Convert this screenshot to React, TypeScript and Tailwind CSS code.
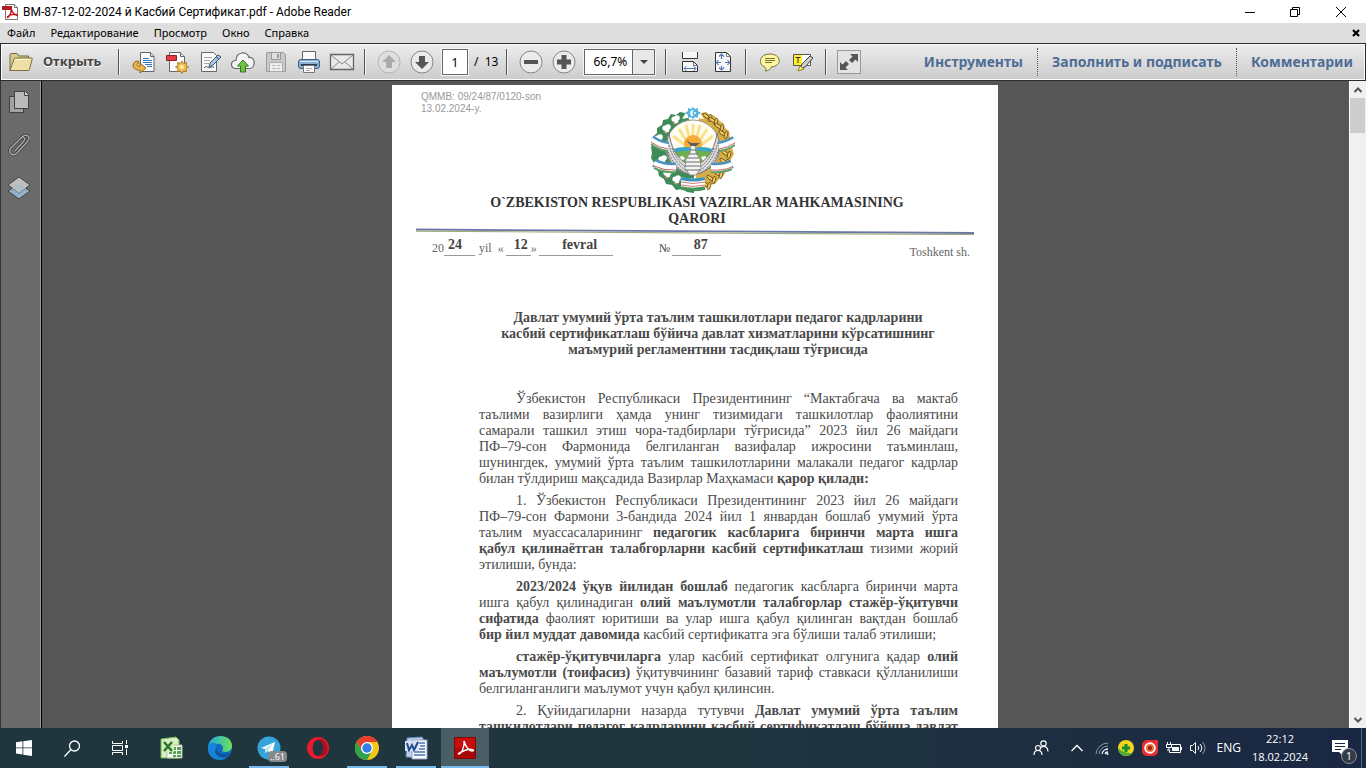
import type { ReactNode } from "react";
import { clsx } from "clsx";

type IconButtonProps = {
  label: string;
  className?: string;
  children: ReactNode;
};

type TaskApp = {
  name: string;
  running?: boolean;
  active?: boolean;
  icon: ReactNode;
};

type Line = {
  content: ReactNode;
  indent?: boolean;
  last?: boolean;
};

const menuItems = ["Файл", "Редактирование", "Просмотр", "Окно", "Справка"];

const IconButton = ({ label, className, children }: IconButtonProps) => (
  <button
    type="button"
    aria-label={label}
    className={clsx("flex shrink-0 items-center justify-center", className ?? "h-8 w-[33px]")}
  >
    {children}
  </button>
);

const Separator = () => (
  <div className="h-[26px] w-0.5 shrink-0 border-l border-[#555] bg-[#f4f4f4]" />
);

/* ---------- Toolbar icons ---------- */

const AcrobatIcon = () => (
  <svg width="18" height="18" viewBox="0 0 18 18">
    <path d="M3.5 1.5h9l3 3v12h-12z" fill="#fff" stroke="#777" />
    <path d="M12.500 1.500v3h3" fill="#ddd" stroke="#777" />
    <path d="M0 3h10v4H0z" fill="#b01c22" />
    <path d="M9 6c2 4 3 6 7 6.500M9 6c1 3-1 7-4 9M5 14c3-2.500 6-3 10-2.500" fill="none" stroke="#c4161c" strokeWidth="1.500" />
  </svg>
);

const FolderIcon = () => (
  <svg width="24" height="20" viewBox="0 0 24 20">
    <path d="M1 18.500V3q0-1.500 1.500-1.500H8l2 2.500h9.500V8" fill="#d8c98c" stroke="#6f6640" />
    <path d="M1 18.500 5 7q.5-1 2-1h15.500q1 0 .7 1l-2.700 10.500q-.3 1-1.500 1z" fill="#eedfa6" stroke="#7d7040" />
    <path d="M6 7.500h15" stroke="#fff8d8" />
  </svg>
);

const ExportIcon = () => (
  <svg width="24" height="24" viewBox="0 0 24 24">
    <path d="M8.500 2.500h10l3.500 3.500v15.500h-13.500z" fill="#fafafa" stroke="#666" />
    <path d="M18.500 2.500v4h3.500" fill="#ddd" stroke="#666" />
    <path d="M11 8.500h6M11 10.500h9M11 12.500h9M13 14.500h7M15 16.500h5" stroke="#3972b8" />
    <path d="M6.500 11C-1 11-1 20.500 8 20v3l6-5-6-5v3.200C4.500 16.500 3.500 13 7 13z" fill="#efb540" stroke="#94621b" />
  </svg>
);

const CreateIcon = () => (
  <svg width="24" height="24" viewBox="0 0 24 24">
    <path d="M4.500 2.500h11l4 4v15h-15z" fill="#fafafa" stroke="#666" />
    <path d="M15.500 2.500v4h4" fill="#ddd" stroke="#666" />
    <path d="M1.500 5.500h10v5h-10z" fill="#e43a43" stroke="#8d2027" />
    <path d="m17 11 1.500 2.500 3-1-.5 3 2.500 1.500-2.500 1.500.5 3-3-.5-1.500 2.500-1.500-2.500-3 .5.500-3-2.500-1.500 2.500-1.500-.5-3 3 1z" fill="#f3bf55" stroke="#b37b22" />
    <circle cx="17" cy="17" r="2" fill="#fff0b5" />
  </svg>
);

const SignIcon = () => (
  <svg width="24" height="24" viewBox="0 0 24 24">
    <path d="M3.500 2.500h12l3 3v16h-15z" fill="#fafafa" stroke="#666" />
    <path d="M6 7.500h8M6 10.500h6M6 13.500h5" stroke="#aaa" />
    <path d="M6 18c3-4 4 2 7-1h3" fill="none" stroke="#555" />
    <path d="m11 17 1-4 8-8 3 2-8 8z" fill="#a9c8e5" stroke="#3e5874" />
    <path d="m18 7 3 2" stroke="#3e5874" />
  </svg>
);

const CloudIcon = () => (
  <svg width="26" height="24" viewBox="0 0 26 24">
    <path d="M6 18.500c-6 0-6-8 0-8 0-9 11-10 13-3 7-1 7 11 0 11z" fill="#f5f5f5" stroke="#666" strokeWidth="1.200" />
    <path d="m13 10 5.500 6h-3v6h-5v-6h-3z" fill="#72c342" stroke="#2d7a20" />
  </svg>
);

const SaveIcon = () => (
  <svg width="22" height="22" viewBox="0 0 22 22">
    <path d="M1.500 1.500h17l2 2v17h-19z" fill="#c9c9c9" stroke="#999" />
    <path d="M6.500 1.500h9v7h-9z" fill="#ddd" stroke="#999" />
    <path d="M12 3h2v4h-2z" fill="#999" />
    <path d="M4.500 11.500h13v9h-13z" fill="#eee" stroke="#aaa" />
    <path d="M7 14.500h8M7 17.500h8" stroke="#bbb" strokeDasharray="4 1" />
  </svg>
);

const PrintIcon = () => (
  <svg width="24" height="24" viewBox="0 0 24 24">
    <path d="M5.500 1.500h13v9h-13z" fill="#fafafa" stroke="#666" />
    <rect x="1.500" y="9.500" width="21" height="9" rx="2.500" fill="#89b1d5" stroke="#3f5f80" />
    <path d="M3 11.500h18" stroke="#d4e7f7" />
    <path d="M4 14h16v2H4z" fill="#273c52" />
    <path d="M6.500 15.500h11v7h-11z" fill="#fafafa" stroke="#777" />
    <path d="M9 18.500h6M9 20.500h4" stroke="#aaa" />
  </svg>
);

const MailIcon = () => (
  <svg width="26" height="18" viewBox="0 0 26 18">
    <path d="M1.500 1.500h23v15h-23z" fill="#e9e9e9" stroke="#666" strokeWidth="1.300" />
    <path d="m2 2 11 9 11-9M2 16l8-7M24 16l-8-7" fill="none" stroke="#888" />
  </svg>
);

const RoundIcon = ({ path, faded }: { path: string; faded?: boolean }) => (
  <svg width="24" height="24" viewBox="0 0 24 24">
    <circle cx="12" cy="12" r="11" fill={faded ? "#dedede" : "#ebebeb"} stroke={faded ? "#b5b5b5" : "#858585"} />
    <path d={path} fill={faded ? "#aaa" : "#555"} />
  </svg>
);

const FitWidthIcon = () => (
  <svg width="20" height="24" viewBox="0 0 20 24">
    <path d="M2.500 2v6.500h15V2" fill="#f7f7f7" stroke="#333" />
    <path d="M2.500 21.500v-10h11l4 4v6z" fill="#f7f7f7" stroke="#333" />
    <path d="M13.500 11.500v4h4" fill="none" stroke="#777" />
    <path d="M4 18.500h12M6.500 16 4 18.500 6.500 21M13.500 16l2.500 2.500-2.500 2.500" fill="none" stroke="#5877b8" />
  </svg>
);

const FitPageIcon = () => (
  <svg width="20" height="24" viewBox="0 0 20 24">
    <path d="M2.500 2.500h11l4 4v15h-15z" fill="#f7f7f7" stroke="#333" />
    <path d="M13.500 2.500v4h4" fill="none" stroke="#777" />
    <path d="M4 12.500h4M12 12.500h4M8.500 4v5M8.500 16v4M6 6.500 8.500 4 11 6.500M6 17.500 8.500 20l2.500-2.500M5.500 10 3.500 12.500l2 2.500M14.500 10l2 2.500-2 2.500" fill="none" stroke="#5877b8" strokeWidth="1.200" />
  </svg>
);

const CommentIcon = () => (
  <svg width="22" height="20" viewBox="0 0 22 20">
    <path d="M5 14.500C-1 12 0 2 11 2s13 12 1 13c0 2-3 4-6 4 2-2 1-3-1-4.500z" fill="#fff7a0" stroke="#77703a" />
    <path d="M6 6.500h10M6 8.500h10M6 10.500h7" stroke="#77703a" />
  </svg>
);

const HighlightIcon = () => (
  <svg width="22" height="20" viewBox="0 0 22 20">
    <path d="M1.500 2.500h17v11h-17z" fill="#fff" stroke="#555" />
    <path d="M2 3h8v10H2z" fill="#ffef2e" />
    <path d="M3.500 5.500h5M6 5.500V11" stroke="#333" />
    <path d="m8 17 2-5 8-8 3 2-8 9z" fill="#ccc" stroke="#444" />
    <path d="m6 19 2-5 4 3z" fill="#fff15a" stroke="#8e872b" />
  </svg>
);

const ExpandIcon = () => (
  <svg width="22" height="22" viewBox="0 0 22 22">
    <path d="M12 3h8v8l-2.500-2.500-3.500 3.500-3-3 3.500-3.500zM2 11l2.500 2.500L8 10l3 3-3.500 3.500L10 19H2z" fill="#555" />
  </svg>
);

/* ---------- Emblem ---------- */

const cotton = [
  [23, 12],
  [14, 21],
  [6, 31],
  [10, 52],
  [15, 66],
  [24, 72],
];

const wheat = [
  [55, 9],
  [61, 13],
  [67, 19],
  [71, 26],
  [74, 46],
  [72, 54],
  [66, 66],
  [59, 71],
  [54, 77],
];

const ribbons = [
  "M0 32q8 6 17 7",
  "M3 56q10 5 22 4",
  "M84 33q-8 5-16 6",
  "M81 57q-9 4-21 3",
];

const Emblem = () => (
  <svg width="84" height="86" viewBox="0 0 84 86" role="img" aria-label="O`zbekiston gerbi" className="mx-auto">
    <path d="m34 6-5-1-4 3-5-1-3 5-5 1-1 5-5 3v5l-4 4 1 5-3 5 1 6-1 5 3 5v5l4 3 1 5 5 3 2 5 6 1 4 5 6-1 5 3 7 1V20z" fill="#3e8a58" />
    <path d="m50 6 5-1 4 3 5 1 3 4 5 3 2 5 4 3 1 6 3 5-1 6 2 6-3 5-1 6-4 5-2 5-5 4-4 5-6 1-5 4-8-1V20z" fill="#d8ad43" />
    {wheat.map(([x, y]) => (
      <g key={`${x}-${y}`} fill="#edc75c" stroke="#5e471a" strokeWidth="0.8">
        <ellipse cx={x} cy={y} rx="1.600" ry="3.800" transform={`rotate(-55 ${x} ${y})`} />
        <ellipse cx={x + 4} cy={y + 2} rx="1.600" ry="3.800" transform={`rotate(15 ${x + 4} ${y + 2})`} />
      </g>
    ))}
    {cotton.map(([x, y]) => (
      <g key={`${x}-${y}`} fill="#fff">
        <circle cx={x} cy={y} r="2.600" />
        <circle cx={x + 3} cy={y - 1} r="2.800" />
        <circle cx={x + 2} cy={y + 2} r="2.400" />
        <path d={`M${x - 1} ${y + 4}l3 1`} stroke="#c98f74" strokeWidth="1.500" />
      </g>
    ))}
    <circle cx="42" cy="40" r="27" fill="#fffdf2" stroke="#999" />
    <path d="M42 17v16M35 18l4 15M28 22l8 13M49 18l-4 15M56 22l-8 13M22 29l12 9M62 29l-12 9" stroke="#fae28c" strokeWidth="3" />
    <circle cx="42" cy="37" r="9" fill="#f4ab38" />
    <path d="M20 43q10-5 22-2 12-3 22 2v5H20z" fill="#3aa6c4" />
    <path d="M19 46q24-5 46 0l-5 16H25z" fill="#6fae4c" />
    <path d="M28 50l4-1 2 3-5 2zM50 50l4-1 3 3-5 2z" fill="#fff" />
    {/* wings */}
    <path d="M18 26c-6 19 0 36 23 42 0-6-4-10-8-13-8-6-13-15-15-29z" fill="#dcdcdc" stroke="#777" />
    <path d="M66 26c6 19 0 36-23 42 0-6 4-10 8-13 8-6 13-15 15-29z" fill="#dcdcdc" stroke="#777" />
    <path d="M17 35c3 13 9 23 21 31M16 42c4 11 9 18 18 24M21 41c3 9 8 15 16 21M67 35c-3 13-9 23-21 31M68 42c-4 11-9 18-18 24M63 41c-3 9-8 15-16 21" fill="none" stroke="#777" strokeDasharray="2 1" />
    {/* body and tail feathers */}
    <path d="M40 37h4l1 9 4 6 1 9-5 7h-6l-5-7 1-9 4-6z" fill="#f4f4f4" stroke="#888" strokeWidth="0.800" />
    <path d="m35 33 5 3h9l-4 3h-5z" fill="#5c5c5c" />
    <path d="M39 43h6M38 47h8M36 51h12M35 55h14M34 59h16M35 63h14" stroke="#6a6a6a" />
    {ribbons.map((d) => (
      <g key={d} fill="none">
        <path d={d} stroke="#4a92c4" strokeWidth="9" />
        <path d={d} stroke="#fff" strokeWidth="4" />
        <g transform="translate(0 3)">
          <path d={d} stroke="#fff" strokeWidth="4" />
          <path d={d} stroke="#cf5f5f" strokeWidth="1" />
        </g>
        <g transform="translate(0 5)">
          <path d={d} stroke="#5aa268" strokeWidth="2" />
        </g>
      </g>
    ))}
    <path d="M30 70q12 3 24 0v12q-12 4-24 0z" fill="#fff" />
    <path d="M30 71.500q12 3 24 0" fill="none" stroke="#3993bd" strokeWidth="3" />
    <path d="M30 75q12 3 24 0M30 78q12 3 24 0" fill="none" stroke="#cf5558" strokeWidth="0.800" />
    <path d="M30 81q12 3 24 0" fill="none" stroke="#45945a" strokeWidth="3.500" />
    <path d="m36 4 6-4 6 4 5 8q-11-3-22 0z" fill="#fff" />
    <path d="m42 0 2 2 3-1v3l3 2-3 2v3l-3-1-2 2-2-2-3 1V8l-3-2 3-2V1l3 1z" fill="#56b5df" />
    <path d="M43 3c-5-1-5 7 0 6-2-1-2-5 0-6z" fill="#fff" />
    <circle cx="44" cy="6" r="1" fill="#fff" />
  </svg>
);

/* ---------- Document ---------- */

const paragraphs: Line[][] = [
  [
    { content: "Ўзбекистон Республикаси Президентининг “Мактабгача ва мактаб", indent: true },
    { content: "таълими вазирлиги ҳамда унинг тизимидаги ташкилотлар фаолиятини" },
    { content: "самарали ташкил этиш чора-тадбирлари тўғрисида” 2023 йил 26 майдаги" },
    { content: "ПФ–79-сон Фармонида белгиланган вазифалар ижросини таъминлаш," },
    { content: "шунингдек, умумий ўрта таълим ташкилотларини малакали педагог кадрлар" },
    {
      content: <>билан тўлдириш мақсадида Вазирлар Маҳкамаси <b>қарор қилади:</b></>,
      last: true,
    },
  ],
  [
    { content: "1. Ўзбекистон Республикаси Президентининг 2023 йил 26 майдаги", indent: true },
    { content: "ПФ–79-сон Фармони 3-бандида 2024 йил 1 январдан бошлаб умумий ўрта" },
    { content: <>таълим муассасаларининг <b>педагогик касбларига биринчи марта ишга</b></> },
    { content: <><b>қабул қилинаётган талабгорларни касбий сертификатлаш</b> тизими жорий</> },
    { content: "этилиши, бунда:", last: true },
  ],
  [
    { content: <><b>2023/2024 ўқув йилидан бошлаб</b> педагогик касбларга биринчи марта</>, indent: true },
    { content: <>ишга қабул қилинадиган <b>олий маълумотли талабгорлар стажёр-ўқитувчи</b></> },
    { content: <><b>сифатида</b> фаолият юритиши ва улар ишга қабул қилинган вақтдан бошлаб</> },
    {
      content: <><b>бир йил муддат давомида</b> касбий сертификатга эга бўлиши талаб этилиши;</>,
      last: true,
    },
  ],
  [
    { content: <><b>стажёр-ўқитувчиларга</b> улар касбий сертификат олгунига қадар <b>олий</b></>, indent: true },
    { content: <><b>маълумотли (тоифасиз)</b> ўқитувчининг базавий тариф ставкаси қўлланилиши</> },
    { content: "белгиланганлиги маълумот учун қабул қилинсин.", last: true },
  ],
  [
    { content: <>2. Қуйидагиларни назарда тутувчи <b>Давлат умумий ўрта таълим</b></>, indent: true },
    { content: <b>ташкилотлари педагог кадрларини касбий сертификатлаш бўйича давлат</b> },
  ],
];

const DocumentPage = () => (
  <article className="h-[860px] w-[606px] shrink-0 bg-white pt-1.5 font-['Liberation_Serif',serif] text-sm leading-4 text-[#4a4a4a]">
    <p className="pl-[29px] font-['Liberation_Sans',sans-serif] text-[10px] leading-3 text-[#999]">
      QMMB: 09/24/87/0120-son
      <br />
      13.02.2024-y.
    </p>
    <div className="-mt-2 pr-1">
      <Emblem />
    </div>
    <h1 className="pt-0.5 pl-1 text-center font-bold text-[#333]">
      O`ZBEKISTON RESPUBLIKASI VAZIRLAR MAHKAMASINING
      <br />
      QARORI
    </h1>
    <svg viewBox="0 0 558 8" className="mx-6 h-2 w-[558px]">
      <path d="M0 2.500 558 6" stroke="#6b77a8" strokeWidth="1.800" />
      <path d="M0 4.200 558 7.600" stroke="#9cab78" strokeWidth="1.200" />
    </svg>
    <div className="flex h-[25px] pr-7 pl-10 text-xs text-[#666]">
      <div className="flex h-[21px] items-end">
        <span>20</span>
        <b className="w-[31px] border-b border-[#999] pl-1 text-sm text-[#444]">24</b>
        <span className="pl-1">yil</span>
        <span className="pl-1.5">«</span>
        <b className="ml-0.5 w-[25px] border-b border-[#999] pl-2 text-sm text-[#444]">12</b>
        <span>»</span>
        <b className="ml-0.5 w-[74px] border-b border-[#999] pl-2 text-center text-sm text-[#444]">fevral</b>
        <span className="ml-[46px] text-[#444]">№</span>
        <b className="ml-0.5 w-[49px] border-b border-[#999] pl-2 text-center text-sm text-[#444]">87</b>
      </div>
      <span className="ml-auto self-end">Toshkent sh.</span>
    </div>
    <h2 className="pt-[50px] pl-[46px] text-center font-bold">
      Давлат умумий ўрта таълим ташкилотлари педагог кадрларини
      <br />
      касбий сертификатлаш бўйича давлат хизматларини кўрсатишнинг
      <br />
      маъмурий регламентини тасдиқлаш тўғрисида
    </h2>
    <div className="space-y-1.5 pt-[33px] pr-10 pl-[87px]">
      {paragraphs.map((lines, index) => (
        <p key={index}>
          {lines.map((line, row) => (
            <span
              key={row}
              className={clsx(
                "block whitespace-nowrap",
                line.indent && "pl-[37px]",
                !line.last && "[text-align-last:justify]"
              )}
            >
              {line.content}
            </span>
          ))}
        </p>
      ))}
    </div>
  </article>
);

/* ---------- Taskbar ---------- */

const apps: TaskApp[] = [
  {
    name: "Excel",
    icon: (
      <svg width="24" height="24" viewBox="0 0 24 24">
        <path d="M2 3 17 1l3 3v18L2 22z" fill="#d9f0c4" stroke="#6fae4c" />
        <path d="M8 9h15v13H8z" fill="#f7fbf4" stroke="#aebfa5" />
        <path d="M10 11h3v3h-3zM14 11h3v3h-3zM18 11h4v3h-4zM10 15h3v3h-3zM14 15h3v3h-3zM18 15h4v3h-4zM14 19h3v2h-3zM18 19h4v2h-4z" fill="#57a456" />
        <path d="M3 5h12v11H3z" fill="#d2edb6" />
        <path d="m5 6 8 9M13 6l-8 9" stroke="#28752d" strokeWidth="2.500" />
      </svg>
    ),
  },
  {
    name: "Edge",
    icon: (
      <svg width="26" height="26" viewBox="0 0 26 26">
        <defs>
          <linearGradient id="edge" x1="0" x2="1">
            <stop stopColor="#25a9e0" />
            <stop offset="1" stopColor="#6ce05a" />
          </linearGradient>
        </defs>
        <circle cx="13" cy="13" r="12" fill="#1268bb" />
        <path d="M1 12C3-3 25-2 25 11c0 6-7 7-10 5 3-4-1-8-5-7-4 0-8 2-9 3z" fill="url(#edge)" />
        <path d="M10 10c-4 8 1 13 9 13-8 5-19-1-18-10 0-5 7-7 9-3z" fill="#1684d8" />
        <path d="M10 12c-1 6 5 9 13 6-4 8-15 4-15-2z" fill="#0d559f" />
      </svg>
    ),
  },
  {
    name: "Telegram",
    running: true,
    icon: (
      <>
        <svg width="24" height="24" viewBox="0 0 24 24">
          <circle cx="12" cy="12" r="11.500" fill="#34a5db" />
          <path d="m4 12 14-6-3 13-4-4-3 2v-4z" fill="#fff" />
          <path d="m8 13 8-6-5 8-3 2z" fill="#bddff1" />
        </svg>
        <span className="absolute right-1.5 bottom-1.5 rounded-sm bg-[#85898c] px-0.5 text-[9px] leading-[11px] text-white">
          ..61
        </span>
      </>
    ),
  },
  {
    name: "Opera",
    icon: (
      <svg width="24" height="24" viewBox="0 0 24 24">
        <path fillRule="evenodd" d="M12 1a11 11 0 1 0 0 22 11 11 0 0 0 0-22zm0 3c7 0 7 16 0 16S5 4 12 4z" fill="#e71b2c" />
        <path d="M12 4c9-6 16 19 0 16 7 0 7-16 0-16z" fill="#ad0e21" />
      </svg>
    ),
  },
  {
    name: "Chrome",
    running: true,
    icon: (
      <svg width="24" height="24" viewBox="0 0 24 24">
        <circle cx="12" cy="12" r="12" fill="#f5c518" />
        <path d="M1.600 6A12 12 0 0 1 22.400 6H12L7 15z" fill="#e43e2f" />
        <path d="M1.600 6A12 12 0 0 0 12 24l5-9H7z" fill="#2fa34e" />
        <circle cx="12" cy="12" r="6" fill="#fff" />
        <circle cx="12" cy="12" r="4.700" fill="#327de8" />
      </svg>
    ),
  },
  {
    name: "Word",
    running: true,
    icon: (
      <svg width="24" height="24" viewBox="0 0 24 24">
        <path d="m3 2 15-1 2 3v18L2 21z" fill="#bfd0ec" stroke="#6181b8" />
        <path d="M8 4h15v19H8z" fill="#f7f9fd" stroke="#91a4c7" />
        <path d="M15 7h6M16 10h5M15 13h6M10 16h11M10 19h11" stroke="#4d73b5" strokeWidth="1.500" />
        <path d="M1 5h14v10H1z" fill="#d8e3f5" />
        <path d="m3 7 2 7 3-5 2 5 4-8" fill="none" stroke="#244b91" strokeWidth="2" />
      </svg>
    ),
  },
  {
    name: "Adobe Reader",
    running: true,
    active: true,
    icon: (
      <svg width="22" height="22" viewBox="0 0 22 22">
        <path d="M.5.500h21v21H.5z" fill="#c80d0d" stroke="#7c0808" />
        <path d="M1 11h20v10H1z" fill="#a70808" />
        <path d="M10 4c2 6 4 10 8 10s0-3-6-1-9 4-7 4 6-7 5-13z" fill="none" stroke="#fff" strokeWidth="1.400" />
      </svg>
    ),
  },
];

const Taskbar = () => (
  <footer className="flex h-10 shrink-0 items-center bg-gradient-to-r from-[#20363e] from-50% to-[#1a2743] font-['Open_Sans',sans-serif] text-[11px] text-white">
    <IconButton label="Пуск" className="h-10 w-12">
      <svg width="16" height="16" viewBox="0 0 16 16" fill="#fff">
        <path d="m0 2.200 6.500-.9v6.200H0zM7.300 1.200 16 0v7.500H7.300zM0 8.300h6.500v6.200L0 13.600zM7.300 8.300H16V16l-8.700-1.200z" />
      </svg>
    </IconButton>
    <IconButton label="Поиск" className="h-10 w-12">
      <svg width="17" height="17" viewBox="0 0 17 17" fill="none" stroke="#fff" strokeWidth="1.300">
        <circle cx="10.500" cy="6" r="5" />
        <path d="m7 9.500-6.500 7" />
      </svg>
    </IconButton>
    <IconButton label="Представление задач" className="h-10 w-12">
      <svg width="16" height="16" viewBox="0 0 16 16" fill="none" stroke="#fff">
        <path d="M.5 1v2.500h10V1M.5 15v-2.500h10V15M.5 5.500h10v5H.5zM14.500 0v4M14.500 9v6" />
        <path d="M13 5h3v3h-3z" fill="#fff" stroke="none" />
      </svg>
    </IconButton>
    <div className="ml-[3px] flex gap-px">
      {apps.map((app) => (
        <button
          key={app.name}
          type="button"
          aria-label={app.name}
          className={clsx(
            "relative flex h-10 w-12 items-center justify-center",
            app.active && "bg-[#4b5d65]"
          )}
        >
          {app.icon}
          {app.running && (
            <span className={clsx("absolute bottom-0 h-0.5 bg-[#76b9ed]", app.active ? "w-12" : "w-10")} />
          )}
        </button>
      ))}
    </div>
    <div className="ml-auto flex items-center">
      <IconButton label="Люди" className="h-10 w-[46px]">
        <svg width="16" height="16" viewBox="0 0 16 16" fill="none" stroke="#fff" strokeWidth="1.200">
          <circle cx="10.500" cy="3.500" r="2.700" />
          <circle cx="5" cy="8" r="2.500" />
          <path d="M1 15c0-6 8-6 8 0M8 7.500c4-2.500 7 0 7 4" />
        </svg>
      </IconButton>
      <IconButton label="Скрытые значки" className="h-10 w-[26px]">
        <svg width="12" height="8" viewBox="0 0 12 8" fill="none" stroke="#fff" strokeWidth="1.300">
          <path d="m.5 7 5.500-5.500L11.500 7" />
        </svg>
      </IconButton>
      <IconButton label="Сеть" className="h-10 w-6">
        <svg width="14" height="14" viewBox="0 0 14 14" fill="none">
          <path d="M1 13A12 12 0 0 1 13 2M4 13a9 9 0 0 1 9-8" stroke="#8b98a6" />
          <path d="M7 13a6 6 0 0 1 6-5M10 13a3 3 0 0 1 3-2" stroke="#fff" strokeWidth="1.300" />
          <circle cx="12.500" cy="13" r="1" fill="#fff" />
        </svg>
      </IconButton>
      <IconButton label="Антивирус" className="h-10 w-6">
        <svg width="16" height="16" viewBox="0 0 16 16">
          <circle cx="8" cy="8" r="8" fill="#f0d51c" />
          <path d="M0 8a8 8 0 0 0 14 5C8 13 4 12 0 8z" fill="#44ab3e" />
          <path d="M6.500 4h3v2.500H12v3H9.500V12h-3V9.500H4v-3h2.500z" fill="#168935" />
        </svg>
      </IconButton>
      <IconButton label="Запись" className="h-10 w-6">
        <svg width="16" height="16" viewBox="0 0 16 16">
          <path d="M5 0h11v11a5 5 0 0 1-5 5H5a5 5 0 0 1-5-5V5a5 5 0 0 1 5-5z" fill="#e92d31" />
          <circle cx="8" cy="8" r="5.800" fill="#fff" />
          <circle cx="8" cy="8" r="4" fill="#e8743a" />
          <circle cx="8" cy="8" r="2.200" fill="#a3231a" />
        </svg>
      </IconButton>
      <IconButton label="Батарея" className="h-10 w-6">
        <svg width="16" height="12" viewBox="0 0 16 12" fill="none" stroke="#fff">
          <path d="M5.500 2.500h9v8h-11V8M15.500 5v3M1.500 0v2M4.500 0v2M.5 2.500h5v3h-5zM3 5v3H1" />
          <path d="M6 5h7v4H6z" fill="#fff" stroke="none" />
        </svg>
      </IconButton>
      <IconButton label="Громкость" className="h-10 w-6">
        <svg width="16" height="14" viewBox="0 0 16 14" fill="none" stroke="#fff">
          <path d="M.5 4.500h2l3-3v11l-3-3h-2zM8 5q1.500 2 0 4M10 3q3.500 4 0 8" />
          <path d="M12.500 1q5 6 0 12" stroke="#8995a5" />
        </svg>
      </IconButton>
      <button type="button" className="h-10 w-[31px] text-right text-xs">ENG</button>
      <button type="button" className="h-10 w-[78px] text-center leading-[18px]">
        22:12
        <br />
        18.02.2024
      </button>
      <button type="button" aria-label="Уведомления" className="relative flex h-10 w-[42px] items-center justify-center">
        <svg width="16" height="16" viewBox="0 0 16 16">
          <path d="M0 0h16v12h-5v4l-4-4H0z" fill="#fff" />
          <path d="M3 3.500h10M3 6.500h10M3 9.500h6" stroke="#1a2743" />
        </svg>
        <span className="absolute right-1 bottom-1 size-4 rounded-full border border-[#8b929d] bg-[#333b48] text-center leading-[14px]">
          1
        </span>
      </button>
      <div className="h-10 w-[5px] border-l border-[#59657a]" />
    </div>
  </footer>
);

/* ---------- Window ---------- */

const TitleBar = () => (
  <header className="flex h-[23px] shrink-0 items-center bg-white pl-0.5 text-xs text-black">
    <AcrobatIcon />
    <span className="pl-[3px] font-['Roboto',sans-serif]">
      BM-87-12-02-2024 й Касбий Сертификат.pdf - Adobe Reader
    </span>
    <div className="ml-auto flex">
      <IconButton label="Свернуть" className="h-5 w-[45px]">
        <svg width="10" height="10" viewBox="0 0 10 10"><path d="M0 5.500h10" stroke="#000" /></svg>
      </IconButton>
      <IconButton label="Восстановить" className="h-5 w-[45px]">
        <svg width="10" height="10" viewBox="0 0 10 10" fill="none" stroke="#000">
          <path d="M.5 2.500h7v7h-7zM2.500 2V.500h7v7H8" />
        </svg>
      </IconButton>
      <IconButton label="Закрыть" className="mr-0.5 h-5 w-[47px]">
        <svg width="10" height="10" viewBox="0 0 10 10"><path d="m0 0 10 10M10 0 0 10" stroke="#000" /></svg>
      </IconButton>
    </div>
  </header>
);

const MenuBar = () => (
  <nav className="flex h-5 shrink-0 items-center bg-[#dedede] pl-[7px] text-[11px] text-black">
    <div className="flex gap-[15px]">
      {menuItems.map((item) => (
        <button key={item} type="button">{item}</button>
      ))}
    </div>
    <IconButton label="Закрыть документ" className="ml-auto h-5 w-[21px]">
      <svg width="8" height="8" viewBox="0 0 8 8"><path d="m1 1 6 6M7 1 1 7" stroke="#000" strokeWidth="2.200" /></svg>
    </IconButton>
  </nav>
);

const Toolbar = () => (
  <div className="flex h-[38px] shrink-0 items-center border border-[#2c2c2c] bg-gradient-to-b from-[#ededed] to-[#cbcbcb] shadow-[inset_0_0_0_1px_#fafafa]">
    <button type="button" className="flex items-center pl-2 text-[13px] font-bold text-[#454545] [text-shadow:0_1px_#fff]">
      <FolderIcon />
      <span className="w-[85px] pl-2.5 text-left">Открыть</span>
    </button>
    <Separator />
    <div className="ml-[7px] flex">
      <IconButton label="Экспорт"><ExportIcon /></IconButton>
      <IconButton label="Создать PDF"><CreateIcon /></IconButton>
      <IconButton label="Подписать"><SignIcon /></IconButton>
      <IconButton label="Загрузить в облако"><CloudIcon /></IconButton>
      <IconButton label="Сохранить"><SaveIcon /></IconButton>
      <IconButton label="Печать"><PrintIcon /></IconButton>
      <IconButton label="Отправить по почте"><MailIcon /></IconButton>
    </div>
    <div className="ml-1.5"><Separator /></div>
    <div className="ml-1.5 flex">
      <IconButton label="Предыдущая страница">
        <RoundIcon faded path="m12 5 7 7h-4v6H9v-6H5z" />
      </IconButton>
      <IconButton label="Следующая страница">
        <RoundIcon path="m12 19 7-7h-4V6H9v6H5z" />
      </IconButton>
    </div>
    <label className="ml-1 flex items-center text-xs text-black">
      <input
        aria-label="Страница"
        defaultValue="1"
        className="h-[26px] w-[26px] border border-[#666] bg-white text-center outline outline-[#f5f5f5]"
      />
      <span className="pl-1.5 whitespace-pre">/  13</span>
    </label>
    <div className="ml-2"><Separator /></div>
    <div className="ml-1.5 flex">
      <IconButton label="Уменьшить"><RoundIcon path="M5 10h14v4H5z" /></IconButton>
      <IconButton label="Увеличить"><RoundIcon path="M9.500 5h5v4.500H19v5h-4.500V19h-5v-4.500H5v-5h4.500z" /></IconButton>
    </div>
    <div className="relative ml-1 flex">
      <select
        aria-label="Масштаб"
        className="h-[26px] w-[71px] appearance-none border border-[#666] bg-white pl-2 text-xs text-black outline outline-[#f5f5f5]"
      >
        <option>66,7%</option>
      </select>
      <span className="pointer-events-none absolute inset-y-px right-px flex w-[22px] items-center justify-center border-l border-[#666] bg-[#e8e8e8]">
        <svg width="8" height="4" viewBox="0 0 8 4"><path d="M0 0h8L4 4z" fill="#444" /></svg>
      </span>
    </div>
    <div className="ml-2.5"><Separator /></div>
    <div className="ml-1.5 flex">
      <IconButton label="По ширине"><FitWidthIcon /></IconButton>
      <IconButton label="По размеру страницы"><FitPageIcon /></IconButton>
    </div>
    <div className="ml-1.5"><Separator /></div>
    <div className="ml-1.5 flex">
      <IconButton label="Добавить записку"><CommentIcon /></IconButton>
      <IconButton label="Выделить текст"><HighlightIcon /></IconButton>
    </div>
    <div className="ml-1.5"><Separator /></div>
    <IconButton label="Режим чтения" className="ml-2.5 size-6 border border-[#999] bg-[#e3e3e3]">
      <ExpandIcon />
    </IconButton>
    <div className="ml-auto flex h-7 pr-3 text-sm font-bold whitespace-nowrap text-[#4d6d96] [text-shadow:0_1px_#fff]">
      <button type="button" className="px-3.5">Инструменты</button>
      <button type="button" className="border-l border-dotted border-[#555] px-3.5">Заполнить и подписать</button>
      <button type="button" className="border-l border-dotted border-[#555] pl-3.5">Комментарии</button>
    </div>
  </div>
);

const SidePanel = () => (
  <aside className="flex w-[42px] shrink-0 flex-col items-center border-r border-l border-r-black border-l-[#333] bg-[#6a6a6a] pt-2 shadow-[inset_-1px_0_#999]">
    <IconButton label="Миниатюры страниц" className="mr-1 h-[26px] w-6">
      <svg width="22" height="24" viewBox="0 0 22 24">
        <path d="M1.500 6.500h14v16h-14z" fill="#a2a2a2" stroke="#404040" />
        <path d="M6.500 1.500h11l3 3v14h-14z" fill="#bababa" stroke="#404040" />
        <path d="M16.500 1.500v4h4" fill="#ddd" stroke="#404040" />
      </svg>
    </IconButton>
    <IconButton label="Вложения" className="mt-[17px] mr-1 h-[26px] w-6">
      <svg width="22" height="24" viewBox="0 0 22 24" fill="none">
        <path d="m7 18 9-10c2-3-1-5-3-3L3 15c-4 5 2 9 6 5L20 8c3-5-2-8-6-4L6 12" stroke="#404040" strokeWidth="3" />
        <path d="m7 18 9-10c2-3-1-5-3-3L3 15c-4 5 2 9 6 5L20 8c3-5-2-8-6-4L6 12" stroke="#aaa" strokeWidth="1.300" />
      </svg>
    </IconButton>
    <IconButton label="Слои" className="mt-[17px] mr-1 h-[26px] w-6">
      <svg width="24" height="24" viewBox="0 0 24 24">
        <path d="m1 15 11-7 11 7-11 8z" fill="#91b0ca" stroke="#454545" />
        <path d="m1 9 11-8 11 8-11 8z" fill="#c9c9c9" fillOpacity="0.9" stroke="#454545" />
        <path d="m5 12 7-4 7 4-7 5z" fill="#aebfc7" />
      </svg>
    </IconButton>
  </aside>
);

const ScrollBar = () => (
  <div className="flex w-[17px] shrink-0 flex-col items-center border-l border-white bg-[#f0f0f0]">
    <IconButton label="Вверх" className="h-[17px] w-4">
      <svg width="8" height="6" viewBox="0 0 8 6"><path d="m.5 5 3.500-3.500L7.500 5" fill="none" stroke="#555" strokeWidth="2" /></svg>
    </IconButton>
    <div className="mr-px h-[35px] w-[15px] bg-[#cdcdcd]" />
    <IconButton label="Вниз" className="mt-auto h-[17px] w-4">
      <svg width="8" height="6" viewBox="0 0 8 6"><path d="M.5 1 4 4.500 7.500 1" fill="none" stroke="#555" strokeWidth="2" /></svg>
    </IconButton>
  </div>
);

export default function App() {
  return (
    <div className="flex h-screen flex-col overflow-hidden font-['Noto_Sans',sans-serif]">
      <TitleBar />
      <MenuBar />
      <Toolbar />
      <div className="flex min-h-0 flex-1">
        <SidePanel />
        <main className="flex min-w-0 flex-1 justify-center overflow-hidden bg-[#565656] pt-1 pr-px">
          <DocumentPage />
        </main>
        <ScrollBar />
      </div>
      <Taskbar />
    </div>
  );
}
